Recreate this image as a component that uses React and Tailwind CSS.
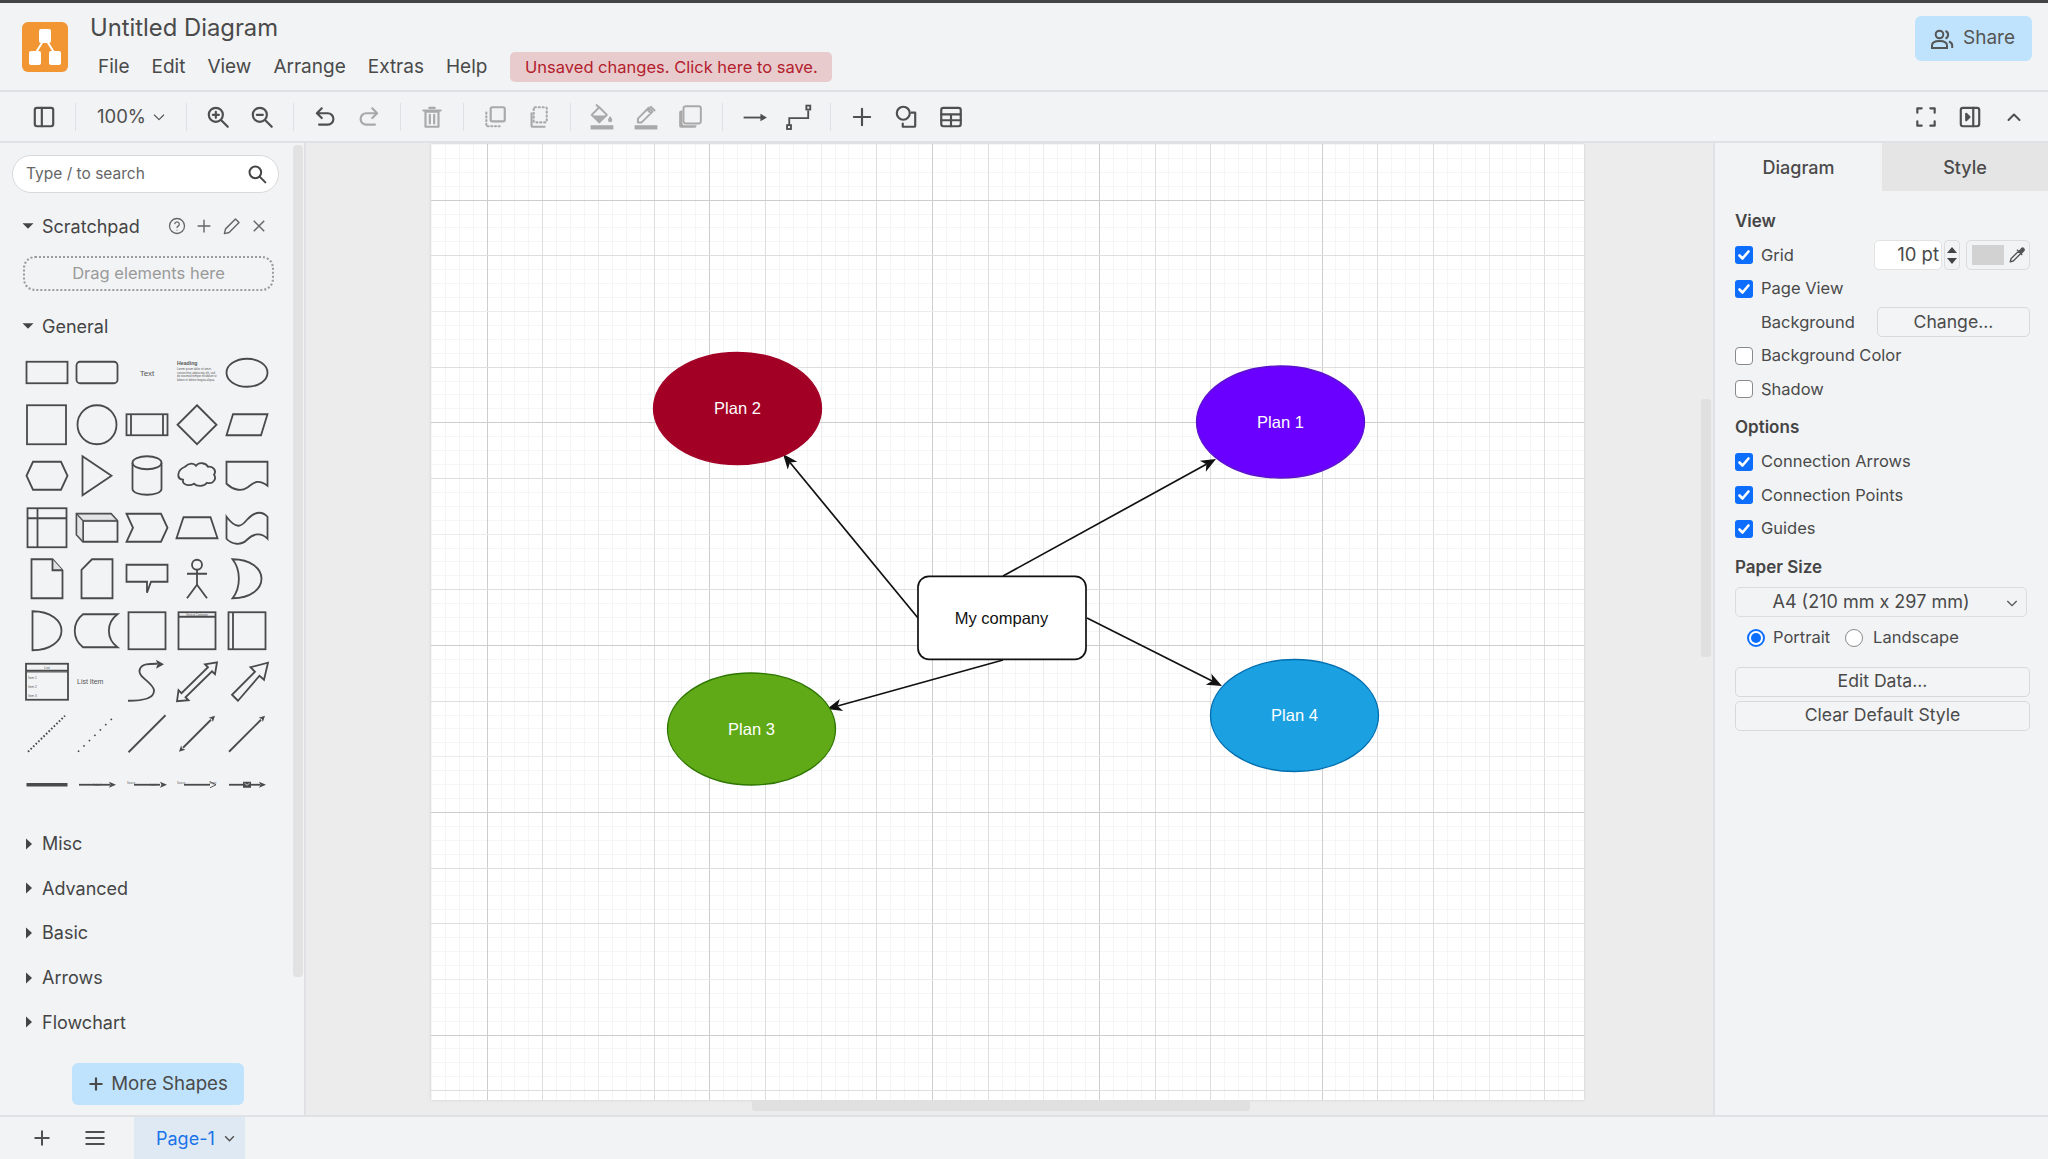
import React from "react";

const ICON = "#4f4f4f";
const OFF = "#a9a9a9";

function Ico({ children, color = ICON, size = 26, sw = 2 }) {
  return (
    <svg width={size} height={size} viewBox="0 0 24 24" fill="none" stroke={color} strokeWidth={sw} strokeLinecap="round" strokeLinejoin="round">
      {children}
    </svg>
  );
}

function Btn({ children }) {
  return <div className="w-[44px] h-[44px] flex items-center justify-center shrink-0">{children}</div>;
}
function Sep({ wide }) {
  return <div className={`w-px h-[28px] bg-[#dfe1e4] shrink-0 ${wide ? "mx-[10px]" : "mx-[9px]"}`} />;
}

const Logo = () => (
  <div className="w-[46px] h-[50px] rounded-[6px] bg-[#f29633] flex items-center justify-center shrink-0">
    <svg width="34" height="38" viewBox="0 0 34 38">
      <path d="M17 10 L7 26 M17 10 L27 26" stroke="#fff" strokeWidth="2" fill="none" />
      <rect x="11" y="1" width="12" height="14" rx="2" fill="#fff" />
      <rect x="1" y="23" width="12" height="14" rx="2" fill="#fff" />
      <rect x="21" y="23" width="12" height="14" rx="2" fill="#fff" />
    </svg>
  </div>
);

function Toolbar() {
  return (
    <div className="h-[51px] flex items-center pl-[22px] pr-[12px] border-b-2 border-[#dfe1e4] shrink-0">
      <Btn><Ico><rect x="3.5" y="3.5" width="17" height="17" rx="2" /><path d="M10 3.5v17" /></Ico></Btn>
      <Sep />
      <div className="w-[92px] flex items-center pl-[12px] gap-[5px] text-[18.5px] text-[#4f4f4f] shrink-0">
        <span>100%</span>
        <Ico size={16} sw={1.6}><path d="M5 9l7 7 7-7" /></Ico>
      </div>
      <Sep />
      <Btn><Ico><circle cx="10" cy="10" r="6.5" /><path d="M15 15l6 6M10 7.2v5.6M7.2 10h5.6" /></Ico></Btn>
      <Btn><Ico><circle cx="10" cy="10" r="6.5" /><path d="M15 15l6 6M7.2 10h5.6" /></Ico></Btn>
      <Sep />
      <Btn><Ico><path d="M9 4L4.5 8.5 9 13M5 8.5h9.5a5.2 5.2 0 0 1 0 10.5H6.5" /></Ico></Btn>
      <Btn><Ico color={OFF}><path d="M15 4l4.5 4.5L15 13M19 8.5H9.5a5.2 5.2 0 0 0 0 10.5H17.5" /></Ico></Btn>
      <Sep />
      <Btn><Ico color={OFF}><path d="M6 7h12v14H6zM4 6h16M9.5 3.5h5M10 10v8M14 10v8" /></Ico></Btn>
      <Sep />
      <Btn><Ico color={OFF}><rect x="8" y="3" width="13" height="13" rx="1.5" /><path strokeDasharray="1 2.4" d="M4 8v12.5h12.5" /></Ico></Btn>
      <div className="-ml-[2px] mr-[2px]"><Btn><Ico color={OFF}><path d="M7 8.5V20a1 1 0 0 0 1 1h11" /><rect x="9" y="3" width="12" height="14" rx="1" strokeDasharray="1 2.6" /></Ico></Btn></div>
      <Sep />
      <Btn>
        <svg width="26" height="26" viewBox="0 0 24 24">
          <path d="M6.5 0.5L9.5 3.5" stroke={OFF} strokeWidth="1.8" />
          <path d="M9.5 3L16.5 10 9.5 17 2.5 10z" fill="#f1f3f5" stroke={OFF} strokeWidth="1.8" strokeLinejoin="round" />
          <path d="M3.5 10.5H15.5L9.5 16.5z" fill={OFF} />
          <path d="M19.5 11s-2 2.6-2 3.8a2 2 0 0 0 4 0c0-1.2-2-3.8-2-3.8z" fill={OFF} />
          <rect x="1.5" y="19.6" width="21" height="3.9" fill={OFF} />
        </svg>
      </Btn>
      <Btn>
        <svg width="26" height="26" viewBox="0 0 24 24" fill="none">
          <path d="M4.5 13.5L14.5 3.5l3.5 3.5-10 10H4.5zM13 5l3.5 3.5" stroke={OFF} strokeWidth="1.8" strokeLinejoin="round" />
          <path d="M15 2.5l1.8-1 4.2 4.2-1.2 1.5z" fill={OFF} />
          <rect x="1.5" y="19.6" width="21" height="3.9" fill={OFF} />
        </svg>
      </Btn>
      <Btn>
        <svg width="26" height="26" viewBox="0 0 24 24">
          <rect x="6" y="2" width="16" height="16" rx="2" fill="#f1f3f5" stroke={OFF} strokeWidth="1.8" />
          <path d="M5 6H4a2 2 0 0 0-2 2v12a2 2 0 0 0 2 2h12a2 2 0 0 0 2-2v-.5H7a2 2 0 0 1-2-2z" fill={OFF} />
        </svg>
      </Btn>
      <Sep wide />
      <Btn>
        <svg width="26" height="26" viewBox="0 0 24 24">
          <path d="M1.5 12.5H19" stroke={ICON} strokeWidth="1.7" />
          <path d="M17 9l6 3.5-6 3.5z" fill={ICON} />
        </svg>
      </Btn>
      <Btn>
        <svg width="26" height="26" viewBox="0 0 24 24" fill="none" stroke={ICON} strokeWidth="1.7">
          <path d="M3 19.5V13h17.5V6" />
          <rect x="1" y="19.5" width="3.6" height="3.6" />
          <rect x="18.8" y="1.5" width="3.6" height="3.6" />
        </svg>
      </Btn>
      <Sep />
      <Btn><Ico><path d="M12 4.5v15M4.5 12h15" /></Ico></Btn>
      <Btn><Ico><circle cx="9.5" cy="8.5" r="6" /><path d="M17 8h3.5v12a1 1 0 0 1-1 1H9v-3" /></Ico></Btn>
      <div className="ml-[1px]"><Btn><Ico><rect x="3" y="3.5" width="18" height="17" rx="2" /><path d="M3 9.5h18M3 15h18M12 9.5v11" /></Ico></Btn></div>
      <div className="ml-auto flex">
        <Btn><Ico><path d="M4 8V4h4M16 4h4v4M20 16v4h-4M8 20H4v-4" /></Ico></Btn>
        <Btn><Ico><rect x="3.5" y="3.5" width="17" height="17" rx="2" /><path d="M15 3.5v17" /><path d="M8.5 9l3 3-3 3z" fill={ICON} /></Ico></Btn>
        <Btn><Ico size={24}><path d="M6.5 15L12 9.5l5.5 5.5" /></Ico></Btn>
      </div>
    </div>
  );
}

function Header() {
  return (
    <div className="h-[92px] flex border-t-[3px] border-t-[#454545] border-b-2 border-b-[#dfe1e4] pl-[22px] pr-[16px] shrink-0">
      <div className="pt-[19px]"><Logo /></div>
      <div className="ml-[22px] flex flex-col">
        <div className="text-[23.8px] text-[#4a4a4a] leading-[28px] mt-[11px] whitespace-nowrap">Untitled Diagram</div>
        <div className="flex items-center mt-[10px] text-[19px] text-[#4a4a4a]">
          <span className="ml-[8px]">File</span>
          <span className="ml-[22px]">Edit</span>
          <span className="ml-[22px]">View</span>
          <span className="ml-[22px]">Arrange</span>
          <span className="ml-[22px]">Extras</span>
          <span className="ml-[22px]">Help</span>
          <div className="ml-[23px] h-[30px] w-[322px] rounded-[5px] bg-[#e8cbcd] text-[#b3202c] text-[16.5px] flex items-center justify-center whitespace-nowrap">
            Unsaved changes. Click here to save.
          </div>
        </div>
      </div>
      <div className="ml-auto mt-[13px] h-[45px] w-[117px] rounded-[6px] bg-[#bfe3fd] flex items-center justify-center gap-[9px] pr-[2px] text-[19px] text-[#555]">
        <svg width="24" height="24" viewBox="0 0 24 24" fill="none" stroke="#555" strokeWidth="2">
          <circle cx="9.5" cy="7.5" r="3.8" />
          <path d="M2 21v-2.5c0-2.8 3.2-4.5 7.5-4.5s7.5 1.7 7.5 4.5V21z" />
          <path d="M15.5 4a4 4 0 0 1 0 7.5M19 14.5c2 .8 3.2 2.1 3.2 4V21" />
        </svg>
        <span>Share</span>
      </div>
    </div>
  );
}

/* ---- shape palette: every drawing is centred on 0,0 ---- */
function S({ children }) {
  return (
    <svg width="50" height="51.5" viewBox="-25 -25.75 50 51.5" fill="none" stroke="#4a4a4a" strokeWidth="1.8" className="block">
      {children}
    </svg>
  );
}
const T = ({ x, y, s, w, children, a = "start" }) => (
  <text x={x} y={y} fontSize={s} fill="#555" stroke="none" textAnchor={a} fontWeight={w} fontFamily="Liberation Sans, sans-serif">{children}</text>
);
const Head = ({ x1, y1, x2, y2, l = 6, hw = 3 }) => {
  const d = Math.hypot(x2 - x1, y2 - y1), ux = (x2 - x1) / d, uy = (y2 - y1) / d;
  const bx = x2 - ux * l, by = y2 - uy * l;
  return <polygon points={`${x2},${y2} ${bx - uy * hw},${by + ux * hw} ${bx + ux * 1.5},${by + uy * 1.5} ${bx + uy * hw},${by - ux * hw}`} fill="#4a4a4a" stroke="none" />;
};

const shapes = [
  <rect x="-20.5" y="-11" width="41" height="21.5" />,
  <rect x="-20.5" y="-11" width="41" height="21.5" rx="3.5" />,
  <T x="0" y="3" s="8" a="middle">Text</T>,
  <g>
    <T x="-20" y="-8" s="5.2" w="700">Heading</T>
    <T x="-20" y="-2.5" s="2.8">Lorem ipsum dolor sit amet,</T>
    <T x="-20" y="1" s="2.8">consectetur adipiscing elit, sed</T>
    <T x="-20" y="4.5" s="2.8">do eiusmod tempor incididunt ut</T>
    <T x="-20" y="8" s="2.8">labore et dolore magna aliqua.</T>
  </g>,
  <ellipse cx="0" cy="0" rx="20.5" ry="14" />,

  <rect x="-20" y="-19.5" width="39" height="39" />,
  <circle cx="0" cy="0" r="19.5" />,
  <g><rect x="-20.5" y="-10.5" width="41" height="21" /><path d="M-16 -10.5V10.5M16 -10.5V10.5" /></g>,
  <path d="M0 -19.5L19.5 0 0 19.5-19.5 0z" />,
  <path d="M-14 -10.5H20.5L14 10.5H-20.5z" />,

  <path d="M-20.5 0L-14 -14H14L20.5 0 14 14H-14z" />,
  <path d="M-14.5 -19.5L14.5 0-14.5 19.5z" />,
  <g><path d="M-14.5 -13V13C-14.5 21 14.5 21 14.5 13V-13" /><ellipse cx="0" cy="-13" rx="14.5" ry="6.5" /></g>,
  <path d="M-12 -9C-8 -13 -3 -13 -1 -10 2 -14 9 -13 11 -9 16 -10 20 -5 17 -1 20 3 16 9 10 7 7 11 0 11-3 8-8 11-15 9-14 4-21 3-20 -6-12 -9z" />,
  <path d="M-20.5 -14H20.5V10C10 2 6 8 0 12-6 16-14 14-20.5 8z" />,

  <g><rect x="-19.5" y="-19.5" width="39" height="39" /><path d="M-9.5 -19.5V19.5M-19.5 -9.5H19.5" /></g>,
  <g><path d="M-20.5 -14H14L20.5 -7V14H-14L-20.5 7z" /><path d="M-20.5 -14L-14 -7V14M-14 -7H20.5" /><path d="M-20.5 -14H14L20.5 -7H-14z M-20.5 -14L-14 -7V14L-20.5 7z" fill="#d8d8d8" fillOpacity="0.5" strokeWidth="0.8" /></g>,
  <path d="M-20.5 -14H14L20.5 0 14 14H-20.5L-14 0z" />,
  <path d="M-13.5 -10.5H13.5L20.5 10.5H-20.5z" />,
  <path d="M-20.5 -11C-10 3-5 -2 0 -8 6 -15 14 -18 20.5 -11V11C14 4 6 6 0 12-6 18-15 17-20.5 11z" />,

  <g><path d="M-15.5 -19.5H5.5L15.5 -8.5V19.5H-15.5z" /><path d="M5.5 -19.5V-8.5H15.5" fill="#e2e2e2" /></g>,
  <path d="M-5 -19.5H15.5V19.5H-15.5V-9z" />,
  <path d="M-20.5 -14H20.5V3H4L0 14V3H-20.5z" />,
  <g><circle cx="0" cy="-14" r="5" /><path d="M0 -9V6M-10 -5H10M0 6L-10 19.5M0 6L10 19.5" /></g>,
  <path d="M-14.5 -19.5C4 -19.5 14.5 -10 14.5 0 14.5 10 4 19.5-14.5 19.5-6 9-6 -9-14.5 -19.5z" />,

  <path d="M-14.5 -19.5C4 -19.5 14.5 -10 14.5 0 14.5 10 4 19.5-14.5 19.5z" />,
  <path d="M-14 -16.5H20.5C9 -8 9 8 20.5 16.5H-14C-25 8-25 -8-14 -16.5z" />,
  <rect x="-18.5" y="-18.5" width="37" height="37" />,
  <g><rect x="-18.5" y="-18.5" width="37" height="37" /><path d="M-18.5 -14H18.5" /><T x="0" y="-15.2" s="2.8" a="middle">Vertical Container</T></g>,
  <g><rect x="-18.5" y="-18.5" width="37" height="37" /><path d="M-14 -18.5V18.5" /></g>,

  <g><rect x="-21" y="-18" width="42" height="36" /><path d="M-21 -11H21" /><path d="M-21 -9.5H21" strokeWidth="0.6" /><T x="0" y="-13" s="3.6" a="middle">List</T><T x="-19" y="-3" s="3.2">Item 1</T><T x="-19" y="6" s="3.2">Item 2</T><T x="-19" y="15" s="3.2">Item 3</T></g>,
  <T x="-20" y="2.5" s="7">List Item</T>,
  <g>
    <path d="M-19 19C-4 19 7 17 7 9 7 1-11 -5-7 -13-5 -18 2 -18 10 -18" />
    <polygon points="17,-17.5 9,-13 10.5,-17.5 9,-22" fill="#4a4a4a" stroke="none" />
  </g>,
  <path d="M-20 19.5L-18.5 8.5-15.5 11.5 11 -14.5 8 -17.5 20 -19.5 18 -7.5 15 -10.5-11.5 15.5-8.5 18.5z" />,
  <path d="M-9 19L-15 13 8 -10 3.5 -14.5 21 -19 17 -2 12.5 -6z" />,

  <path d="M-19 18L18 -18" strokeWidth="2" strokeDasharray="1.6 2" />,
  <path d="M-19 18L18 -18" strokeWidth="1.6" strokeDasharray="1.6 6" />,
  <path d="M-18.5 18.5L18.5 -18.5" />,
  <g><path d="M-14 14L14 -14" /><Head x1={-14} y1={14} x2={-18} y2={18} /><Head x1={14} y1={-14} x2={18} y2={-18} /></g>,
  <g><path d="M-18 18L14 -14" /><Head x1={14} y1={-14} x2={18} y2={-18} /></g>,

  <path d="M-20.5 0H20.5" strokeWidth="3.4" />,
  <g><path d="M-18 0H13" /><polygon points="19,0 12,-3 13.5,0 12,3" fill="#4a4a4a" stroke="none" /><T x="0" y="1.2" s="3" a="middle">Label</T></g>,
  <g><path d="M-13 0H13" /><polygon points="20,0 13,-3 14.5,0 13,3" fill="#4a4a4a" stroke="none" /><T x="-20" y="-1" s="2.6">Source</T><T x="3" y="1" s="2.6">Label</T></g>,
  <g><path d="M-13 0H13" /><path d="M13 -3L19 0 13 3" strokeWidth="0.9" /><T x="-20" y="-1" s="2.6">Source</T><T x="12" y="-1" s="2.6">Target</T></g>,
  <g><path d="M-18 0H13" /><polygon points="19,0 12,-3 13.5,0 12,3" fill="#4a4a4a" stroke="none" /><rect x="-4" y="-3" width="8" height="6" fill="#4a4a4a" stroke="none" /><path d="M-2.5 -1.5L0 0.5 2.5 -1.5" stroke="#fff" strokeWidth="0.7" /></g>,
];

const Caret = ({ open }) => (
  <svg width="12" height="12" viewBox="0 0 12 12" className="shrink-0">
    {open ? <path d="M.5 3.2h11L6 8.8z" fill="#444" /> : <path d="M3 .5v11L9 6z" fill="#444" />}
  </svg>
);

function SectionRow({ label }) {
  return (
    <div className="h-[44.6px] flex items-center pl-[23px] gap-[7px] text-[18px] text-[#454545]">
      <Caret />
      <span>{label}</span>
    </div>
  );
}

function Sidebar() {
  return (
    <div className="relative w-[306px] shrink-0 border-r-2 border-[#dfe1e4] flex flex-col">
      <div className="mt-[12px] ml-[12px] w-[267px] h-[38px] rounded-full bg-white border border-[#d9d9d9] flex items-center pl-[13px] pr-[11px] text-[15.5px] text-[#666] shrink-0">
        <span>Type / to search</span>
        <svg className="ml-auto" width="20" height="20" viewBox="0 0 24 24" fill="none" stroke="#444" strokeWidth="2.4" strokeLinecap="round"><circle cx="10" cy="10" r="7" /><path d="M15.5 15.5L22 22" /></svg>
      </div>
      <div className="mt-[17px] h-[32px] flex items-center pl-[22px] gap-[8px] text-[18px] text-[#454545] shrink-0">
        <Caret open />
        <span className="w-[118px]">Scratchpad</span>
        <div className="flex items-center gap-[9px]">
          <svg width="18" height="18" viewBox="0 0 24 24" fill="none" stroke="#666" strokeWidth="1.7"><circle cx="12" cy="12" r="10" /><path d="M9 9.5a3 3 0 1 1 4.5 2.6c-1 .6-1.5 1.2-1.5 2.4M12 17v1" /></svg>
          <svg width="18" height="18" viewBox="0 0 24 24" fill="none" stroke="#666" strokeWidth="1.9"><path d="M12 3.5v17M3.5 12h17" /></svg>
          <svg width="19" height="19" viewBox="0 0 24 24" fill="none" stroke="#666" strokeWidth="1.8" strokeLinejoin="round"><path d="M3 21l1.5-6L17 2.5l4.5 4.5L9 19.5z" /></svg>
          <svg width="18" height="18" viewBox="0 0 24 24" fill="none" stroke="#666" strokeWidth="1.9"><path d="M5 5l14 14M19 5L5 19" /></svg>
        </div>
      </div>
      <div className="mt-[14px] ml-[23px] w-[251px] h-[35px] rounded-[12px] border-2 border-dotted border-[#9b9b9b] flex items-center justify-center text-[16.5px] text-[#9a9a9a] shrink-0">
        Drag elements here
      </div>
      <div className="mt-[19px] h-[32px] flex items-center pl-[22px] gap-[8px] text-[18px] text-[#454545] shrink-0">
        <Caret open />
        <span>General</span>
      </div>
      <div className="mt-[5px] ml-[22px] grid grid-cols-[repeat(5,50px)] auto-rows-[51.5px] shrink-0">
        {shapes.map((s, i) => <S key={i}>{s}</S>)}
      </div>
      <div className="mt-[11px] shrink-0">
        {["Misc", "Advanced", "Basic", "Arrows", "Flowchart"].map((l) => <SectionRow key={l} label={l} />)}
      </div>
      <div className="mt-[19px] ml-[72px] w-[172px] h-[42px] rounded-[6px] bg-[#bfe3fd] flex items-center justify-center gap-[7px] text-[18.7px] text-[#4a4a4a] shrink-0">
        <svg width="16" height="16" viewBox="0 0 16 16" stroke="#4a4a4a" strokeWidth="2.2"><path d="M8 1.5v13M1.5 8h13" /></svg>
        <span>More Shapes</span>
      </div>
      <div className="absolute left-[293px] top-[2px] w-[10px] h-[832px] rounded-[4px] bg-[#e2e2e2]" />
    </div>
  );
}

/* ---- diagram: absolute page coordinates through the viewBox ---- */
const PX = 431, PY = 144, PW = 1153, PH = 956;
const MAJOR = 55.66, MINOR = 13.915;
const range = (start, end, step) => {
  const out = [];
  for (let v = start; v < end; v += step) out.push(v);
  return out;
};
const snap = (v) => Math.round(v) + 0.5;
const DARK = [1, 5, 9, 12, 16];
const shade = (i) => (DARK.includes(i) ? "#cdcdcd" : i % 4 === 3 ? "#ececec" : "#dedede");

function Arrow({ x1, y1, x2, y2 }) {
  const d = Math.hypot(x2 - x1, y2 - y1), ux = (x2 - x1) / d, uy = (y2 - y1) / d;
  const l = 15, hw = 6.2, nx = -uy, ny = ux;
  const bx = x2 - ux * l, by = y2 - uy * l;
  const mx = x2 - ux * (l - 4), my = y2 - uy * (l - 4);
  return (
    <g>
      <line x1={x1} y1={y1} x2={mx} y2={my} stroke="#111" strokeWidth="1.7" />
      <polygon points={`${x2},${y2} ${bx + nx * hw},${by + ny * hw} ${mx},${my} ${bx - nx * hw},${by - ny * hw}`} fill="#111" />
    </g>
  );
}

const Node = ({ cx, cy, fill, stroke, label }) => (
  <g>
    <ellipse cx={cx} cy={cy} rx="84" ry="56" fill={fill} stroke={stroke} strokeWidth="1.3" />
    <text x={cx} y={cy + 5.5} textAnchor="middle" fontSize="16.5" fill="#fff" fontFamily="Liberation Sans, Arial, sans-serif">{label}</text>
  </g>
);

function Canvas() {
  return (
    <div className="relative flex-1 bg-[#ececec] overflow-hidden">
      <div className="mt-px ml-[125px] w-[1153px] h-[956px] bg-white shadow-[0_0_3px_rgba(0,0,0,0.12)]">
        <svg width={PW} height={PH} viewBox={`${PX} ${PY} ${PW} ${PH}`} className="block">
          {range(PX, PX + PW, MINOR).map((x, i) => <line key={`a${i}`} x1={snap(x)} x2={snap(x)} y1={PY} y2={PY + PH} stroke="#f5f5f5" strokeWidth="1" />)}
          {range(PY, PY + PH, MINOR).map((y, i) => <line key={`b${i}`} y1={snap(y)} y2={snap(y)} x1={PX} x2={PX + PW} stroke="#f5f5f5" strokeWidth="1" />)}
          {range(PX + MAJOR, PX + PW, MAJOR).map((x, i) => <line key={`c${i}`} x1={snap(x)} x2={snap(x)} y1={PY} y2={PY + PH} stroke={shade(i + 1)} strokeWidth="1" />)}
          {range(PY + MAJOR, PY + PH, MAJOR).map((y, i) => <line key={`d${i}`} y1={snap(y)} y2={snap(y)} x1={PX} x2={PX + PW} stroke={shade(i + 1)} strokeWidth="1" />)}

          <Arrow x1={1003} y1={576} x2={1216} y2={459} />
          <Arrow x1={918} y1={618} x2={783} y2={454} />
          <Arrow x1={1003} y1={660} x2={827} y2={709} />
          <Arrow x1={1087} y1={618} x2={1222} y2={686} />

          <Node cx={737.5} cy={408.5} fill="#a20025" stroke="#a20025" label="Plan 2" />
          <Node cx={1280.5} cy={422} fill="#6a00ff" stroke="#5a12c9" label="Plan 1" />
          <Node cx={751.5} cy={729} fill="#60a917" stroke="#2d7600" label="Plan 3" />
          <Node cx={1294.5} cy={715.5} fill="#1ba1e2" stroke="#006eaf" label="Plan 4" />

          <rect x="918" y="576.3" width="168" height="83" rx="11" fill="#fff" stroke="#111" strokeWidth="1.7" />
          <text x="1001.5" y="623.5" textAnchor="middle" fontSize="16.5" fill="#111" fontFamily="Liberation Sans, Arial, sans-serif">My company</text>
        </svg>
      </div>
      <div className="absolute left-[446px] top-[957px] w-[498px] h-[11px] rounded-[3px] bg-[#e0e0e0]" />
      <div className="absolute left-[1395px] top-[256px] w-[10px] h-[258px] rounded-[3px] bg-[#e0e0e0]" />
    </div>
  );
}

function Check({ on }) {
  return on ? (
    <div className="w-[18px] h-[18px] rounded-[3px] bg-[#0d6efd] flex items-center justify-center shrink-0">
      <svg width="14" height="14" viewBox="0 0 14 14" fill="none" stroke="#fff" strokeWidth="2.6" strokeLinecap="round" strokeLinejoin="round"><path d="M2.5 7.5l3 3 6-7" /></svg>
    </div>
  ) : (
    <div className="w-[18px] h-[18px] rounded-[4px] bg-white border border-[#8a8a8a] shrink-0" />
  );
}

function CheckRow({ on, label, children }) {
  return (
    <div className="h-[33.5px] flex items-center gap-[8px] text-[16.5px] text-[#4a4a4a]">
      <Check on={on} />
      <span>{label}</span>
      {children}
    </div>
  );
}

const Head2 = ({ className = "", children }) => (
  <div className={`text-[17px] font-semibold text-[#454545] ${className}`}>{children}</div>
);

const OutlineBtn = ({ className = "", children }) => (
  <div className={`h-[30px] rounded-[5px] border border-[#d9d9d9] bg-[#f3f4f6] flex items-center justify-center text-[17.6px] text-[#4a4a4a] ${className}`}>{children}</div>
);

function Panel() {
  return (
    <div className="w-[335px] shrink-0 border-l-2 border-[#dfe1e4] flex flex-col">
      <div className="h-[48px] flex shrink-0 text-[18px] font-medium text-[#4a4a4a]">
        <div className="w-[167px] flex items-center justify-center">Diagram</div>
        <div className="flex-1 flex items-center justify-center bg-[#e5e5e5]">Style</div>
      </div>
      <div className="pl-[20px] pr-[18px]">
        <Head2 className="h-[33.5px] flex items-end pb-[4px] mt-[14px]">View</Head2>
        <CheckRow on label="Grid">
          <div className="ml-auto flex items-center">
            <div className="w-[68px] h-[30px] rounded-[5px] bg-white border border-[#e2e2e2] flex items-center justify-end pr-[2px] text-[18.5px]">10 pt</div>
            <div className="ml-[2px] w-[16px] h-[30px] rounded-[4px] border border-[#dcdcdc] flex flex-col items-center justify-center gap-[5px]">
              <svg width="10" height="6" viewBox="0 0 10 6"><path d="M5 0l5 6H0z" fill="#444" /></svg>
              <svg width="10" height="6" viewBox="0 0 10 6"><path d="M0 0h10L5 6z" fill="#444" /></svg>
            </div>
            <div className="ml-[6px] w-[64px] h-[30px] rounded-[5px] border border-[#dcdcdc] flex items-center pl-[5px] gap-[4px]">
              <div className="w-[32px] h-[20px] bg-[#d2d2d2]" />
              <svg width="18" height="18" viewBox="0 0 24 24" fill="none" stroke="#555" strokeWidth="1.8" strokeLinejoin="round"><path d="M3 21l1-4L14 7l3 3L7 20zM12 5l7 7" /><path d="M15 7l3-3.5a2 2 0 0 1 3 3L17.5 10z" fill="#555" /></svg>
            </div>
          </div>
        </CheckRow>
        <CheckRow on label="Page View" />
        <div className="h-[33.5px] flex items-center pl-[26px] text-[16.5px] text-[#4a4a4a]">
          <span>Background</span>
          <OutlineBtn className="ml-auto w-[153px]">Change...</OutlineBtn>
        </div>
        <CheckRow label="Background Color" />
        <CheckRow label="Shadow" />
        <Head2 className="mt-[8px] h-[28px] flex items-center">Options</Head2>
        <div className="mt-[3px]">
          <CheckRow on label="Connection Arrows" />
          <CheckRow on label="Connection Points" />
          <CheckRow on label="Guides" />
        </div>
        <Head2 className="mt-[8px] h-[28px] flex items-center">Paper Size</Head2>
        <div className="relative mt-[5px] w-[292px] h-[30px] rounded-[5px] border border-[#dcdcdc] flex items-center justify-center pr-[20px] text-[18px] text-[#4a4a4a]">
          A4 (210 mm x 297 mm)
          <svg className="absolute right-[6px] top-[7px]" width="16" height="16" viewBox="0 0 24 24" fill="none" stroke="#555" strokeWidth="2"><path d="M5 9l7 7 7-7" /></svg>
        </div>
        <div className="mt-[11px] h-[20px] flex items-center pl-[12px] text-[16.5px] text-[#4a4a4a]">
          <div className="w-[18px] h-[18px] rounded-full border-2 border-[#0d6efd] bg-white flex items-center justify-center shrink-0">
            <div className="w-[10px] h-[10px] rounded-full bg-[#0d6efd]" />
          </div>
          <span className="ml-[8px]">Portrait</span>
          <div className="ml-[15px] w-[18px] h-[18px] rounded-full border border-[#8a8a8a] bg-white shrink-0" />
          <span className="ml-[10px]">Landscape</span>
        </div>
        <OutlineBtn className="mt-[19px] w-[295px]">Edit Data...</OutlineBtn>
        <OutlineBtn className="mt-[4px] w-[295px]">Clear Default Style</OutlineBtn>
      </div>
    </div>
  );
}

function Footer() {
  return (
    <div className="h-[44px] flex border-t-2 border-[#dfe1e4] shrink-0">
      <div className="w-[84px] flex items-center justify-center">
        <svg width="18" height="18" viewBox="0 0 18 18" stroke="#4f4f4f" strokeWidth="2"><path d="M9 1.5v15M1.5 9h15" /></svg>
      </div>
      <div className="w-[22px] flex items-center justify-center">
        <svg width="22" height="16" viewBox="0 0 22 16" stroke="#4f4f4f" strokeWidth="2"><path d="M1.5 2h19M1.5 8h19M1.5 14h19" /></svg>
      </div>
      <div className="ml-[28px] w-[111px] bg-[#dfe9f4] flex items-center pl-[22px] gap-[8px] text-[18px] text-[#1a73e8]">
        <span>Page-1</span>
        <svg width="13" height="13" viewBox="0 0 24 24" fill="none" stroke="#4f4f4f" strokeWidth="2.6"><path d="M4 8l8 8 8-8" /></svg>
      </div>
    </div>
  );
}

export default function App() {
  return (
    <div className="w-[2048px] h-[1159px] flex flex-col overflow-hidden bg-[#f1f3f5] font-['Inter',sans-serif]">
      <Header />
      <Toolbar />
      <div className="flex-1 flex min-h-0">
        <Sidebar />
        <Canvas />
        <Panel />
      </div>
      <Footer />
    </div>
  );
}
